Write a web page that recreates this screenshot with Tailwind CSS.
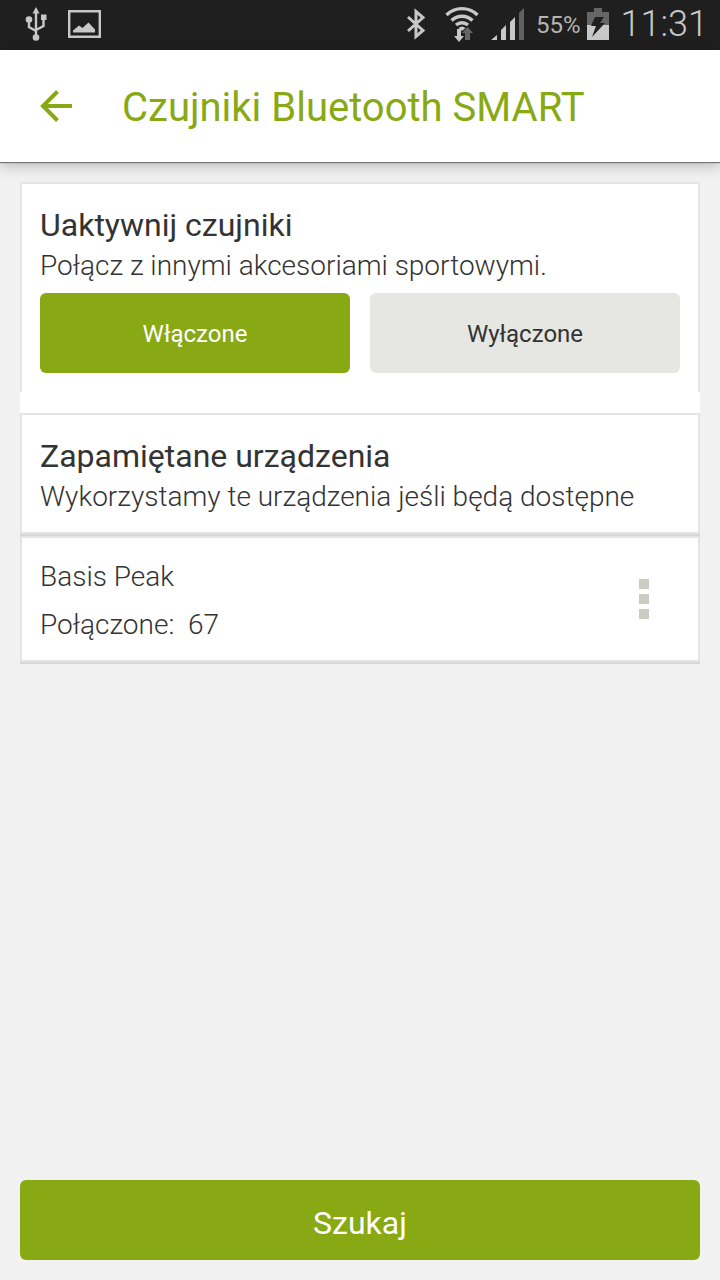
<!DOCTYPE html>
<html lang="pl">
<head>
<meta charset="utf-8">
<meta name="viewport" content="width=device-width, initial-scale=1">
<title>Czujniki Bluetooth SMART</title>
<script src="https://cdn.jsdelivr.net/npm/@tailwindcss/browser@4"></script>
</head>
<body class="flex min-h-screen flex-col bg-[#f1f1f1] font-['Roboto',sans-serif] text-[#333333]">
  <div class="flex h-[50px] items-center justify-between bg-[#1f1f1f] pr-3 pb-0.5 pl-6 text-[#c8c8c8]">
    <div class="flex items-center gap-5">
      <svg class="h-9 w-6" viewBox="0 0 24 36" fill="none" stroke="currentColor" stroke-width="2.400" aria-label="USB">
        <path d="M12 5v26M12 25l-7-4v-8M12 24l7.500-4v-9"/>
        <path d="M12 1l3.500 6.500h-7zM17 8.500h5.500v5.500h-5.500z" fill="currentColor" stroke="none"/>
        <circle cx="5" cy="13.500" r="3.300" fill="currentColor" stroke="none"/>
        <circle cx="12" cy="31.500" r="3.300" fill="currentColor" stroke="none"/>
      </svg>
      <svg class="h-7 w-[33px]" viewBox="0 0 33 28" aria-label="Obraz">
        <path d="M1.200 1.200h30.600v25.600H1.200z" fill="none" stroke="currentColor" stroke-width="2.400"/>
        <path d="M5 22.500v-2l6-5 3.500 2.500 6-5.500 6.500 7v3z" fill="currentColor"/>
      </svg>
    </div>
    <div class="flex items-center">
      <svg class="mr-4 h-8 w-6" viewBox="0 0 24 32" fill="none" stroke="currentColor" stroke-width="3" aria-label="Bluetooth">
        <path d="M3 9l15 13.500-7 6V3.500l7 6L3 23"/>
      </svg>
      <svg class="mr-3 h-9 w-[34px]" viewBox="0 0 34 36" aria-label="Wi-Fi">
        <g fill="none" stroke="currentColor" stroke-width="3.400">
          <path d="M1.500 9a22 22 0 0 1 31 0M6.500 14.500a15 15 0 0 1 21 0M11 19a9 9 0 0 1 12 0"/>
        </g>
        <path d="M13.500 22q3.500-3 7 0l-3.500 3z" fill="currentColor"/>
        <path d="M12 23h4v7h3l-5 6-5-6h3z" fill="currentColor"/>
        <path d="M20 34V27h-3l5.500-6 5.500 6h-3v7z" fill="#666666"/>
      </svg>
      <svg class="mr-3 h-8 w-[33px]" viewBox="0 0 33 32" aria-label="Sygnał">
        <path d="M0 32L6 27v5zM10 32V22l5-5v15zM19 32V14l5-5v23z" fill="currentColor"/>
        <path d="M28 32V5l5-5v32z" fill="#616161"/>
      </svg>
      <span class="mr-1.5 pt-0.5 text-[24px] leading-8 text-[#b4b4b4]">55%</span>
      <svg class="mr-3 h-8 w-[22px]" viewBox="0 0 22 32" aria-label="Ładowanie">
        <path d="M0 4h7V0h8v4h7v13H0z" fill="#666666"/>
        <path d="M0 17h22v15H0z" fill="currentColor"/>
        <path d="M8 9h9l-4 6h5L5 29l4-11H4z" fill="#1f1f1f"/>
      </svg>
      <time class="text-[36px] leading-10 font-light">11:31</time>
    </div>
  </div>

  <header class="relative flex h-28 items-center gap-[50px] bg-white pl-10 text-[#88a814] shadow-[0_1px_1px_#777777,0_3px_14px_#00000040]">
    <button type="button" aria-label="Wstecz">
      <svg class="h-8 w-8" viewBox="0 0 32 32" fill="none" stroke="currentColor" stroke-width="4">
        <path d="M32 16H3M17.500 1.500L3 16l14.500 14.500"/>
      </svg>
    </button>
    <h1 class="pt-1 text-[40px] leading-12">Czujniki Bluetooth SMART</h1>
  </header>

  <main class="flex flex-1 flex-col px-5 pt-5 pb-5">
    <section class="border-2 border-b-0 border-[#e4e4e4] bg-white px-[18px] pt-[19px] pb-[19px]">
      <h2 class="text-[32px] leading-11">Uaktywnij czujniki</h2>
      <p class="pt-px text-[28px] leading-9 font-light">Połącz z innymi akcesoriami sportowymi.</p>
      <div class="mt-[9px] grid grid-cols-2 gap-5">
        <button type="button" aria-pressed="true" class="h-20 rounded-md bg-[#88a814] pt-0.5 text-[24px] text-white">Włączone</button>
        <button type="button" aria-pressed="false" class="h-20 rounded-md bg-[#e6e7e2] pt-0.5 text-[24px]">Wyłączone</button>
      </div>
    </section>
    <div class="h-[21px] bg-white"></div>
    <section class="border-2 border-[#e4e4e4] bg-white px-[18px] pt-[19px] pb-[17px]">
      <h2 class="text-[32px] leading-11">Zapamiętane urządzenia</h2>
      <p class="pt-px text-[28px] leading-9 font-light">Wykorzystamy te urządzenia jeśli będą dostępne</p>
    </section>
    <div class="h-0.5 bg-[#d7d7d7]"></div>
    <section class="flex items-center justify-between border-2 border-[#e4e4e4] bg-white pt-[15px] pr-10 pb-[11px] pl-[18px] shadow-[0_2px_0_#d7d7d7]">
      <div class="text-[28px] leading-12 font-light">
        <h3>Basis Peak</h3>
        <p class="whitespace-pre">Połączone:  67</p>
      </div>
      <button type="button" aria-label="Więcej opcji" class="flex w-7 flex-col items-center gap-[5px] pb-1">
        <span class="size-2.5 bg-[#cbccc4]"></span>
        <span class="size-2.5 bg-[#cbccc4]"></span>
        <span class="size-2.5 bg-[#cbccc4]"></span>
      </button>
    </section>
    <button type="button" class="mt-auto h-20 rounded-md bg-[#88a814] pt-1.5 text-[32px] text-white">Szukaj</button>
  </main>
</body>
</html>
